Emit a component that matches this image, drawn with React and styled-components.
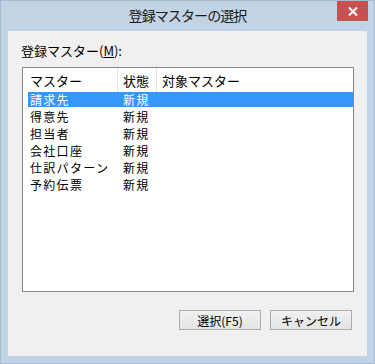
import React from "react";
import styled, { createGlobalStyle } from "styled-components";

const Global = createGlobalStyle`
  html, body { margin: 0; padding: 0; }
  body { font-family: "Noto Sans CJK JP", "Noto Sans", sans-serif; }
`;

const Window = styled.div`
  width: 375px;
  height: 364px;
  box-sizing: border-box;
  background: #c2d3e6;
  border: 1px solid #a7bad0;
  display: flex;
  flex-direction: column;
`;

const TitleBar = styled.div`
  height: 30px;
  display: grid;
  grid-template-columns: 1fr auto 1fr;
  align-items: start;
`;

const Title = styled.div`
  grid-column: 2;
  font-size: 14px;
  letter-spacing: -0.9px;
  line-height: 29px;
  color: #1a1a1a;
`;

const CloseButton = styled.div`
  grid-column: 3;
  justify-self: end;
  margin-right: 6px;
  width: 31px;
  height: 20px;
  background: #c75050;
  display: flex;
  align-items: center;
  justify-content: center;
`;

const Client = styled.div`
  flex: 1;
  margin: 0 7px 7px 7px;
  background: #f0f0f0;
  display: flex;
  flex-direction: column;
  padding: 13px 13px 0 14px;
  font-size: 13px;
  color: #000;
`;

const Label = styled.div`
  line-height: 14px;
  height: 14px;
  margin: 0 0 9px -1px;
  white-space: nowrap;
`;

const ListView = styled.div`
  height: 225px;
  box-sizing: border-box;
  border: 1px solid #828790;
  background: #fff;
  display: flex;
  flex-direction: column;
`;

const Header = styled.div`
  height: 24px;
  display: grid;
  grid-template-columns: 95px 39px 1fr;
`;

const HeaderCell = styled.div`
  display: flex;
  align-items: center;
  padding-left: ${(p) => p.$pad}px;
  border-right: ${(p) => (p.$last ? "none" : "1px solid #e5e5e5")};
  white-space: nowrap;
`;

const Rows = styled.div`
  display: flex;
  flex-direction: column;
  gap: 2px;
  padding: 0 0 0 5px;
`;

const Row = styled.div`
  height: 15px;
  display: grid;
  grid-template-columns: 90px 1fr;
  align-items: center;
  font-size: 12px;
  letter-spacing: 1.3px;
  background: ${(p) => (p.$selected ? "#3399ff" : "transparent")};
  color: ${(p) => (p.$selected ? "#fff" : "#000")};
`;

const Cell = styled.div`
  padding-left: ${(p) => p.$pad}px;
  line-height: 15px;
  white-space: nowrap;
`;

const ButtonBar = styled.div`
  display: flex;
  justify-content: flex-end;
  gap: 9px;
  margin-top: 18px;
  margin-right: 2px;
`;

const Button = styled.div`
  width: 82px;
  height: 20px;
  box-sizing: border-box;
  border: 1px solid #acacac;
  background: linear-gradient(#f0f0f0, #e5e5e5);
  display: flex;
  align-items: center;
  justify-content: center;
  font-size: 12px;
  color: #000;
`;

const rows = [
  ["請求先", "新規"],
  ["得意先", "新規"],
  ["担当者", "新規"],
  ["会社口座", "新規"],
  ["仕訳パターン", "新規"],
  ["予約伝票", "新規"],
];

export default function App() {
  return (
    <>
      <Global />
      <Window>
        <TitleBar>
          <Title>登録マスターの選択</Title>
          <CloseButton>
            <svg width="10" height="9" viewBox="0 0 10 9">
              <path d="M1 0.5 L9 8.5 M9 0.5 L1 8.5" stroke="#fff" strokeWidth="2" />
            </svg>
          </CloseButton>
        </TitleBar>
        <Client>
          <Label>登録マスター(<u>M</u>):</Label>
          <ListView>
            <Header>
              <HeaderCell $pad={7}>マスター</HeaderCell>
              <HeaderCell $pad={5}>状態</HeaderCell>
              <HeaderCell $pad={5} $last>対象マスター</HeaderCell>
            </Header>
            <Rows>
              {rows.map(([name, state], i) => (
                <Row key={name} $selected={i === 0}>
                  <Cell $pad={2}>{name}</Cell>
                  <Cell $pad={5}>{state}</Cell>
                </Row>
              ))}
            </Rows>
          </ListView>
          <ButtonBar>
            <Button>選択(F5)</Button>
            <Button>キャンセル</Button>
          </ButtonBar>
        </Client>
      </Window>
    </>
  );
}
